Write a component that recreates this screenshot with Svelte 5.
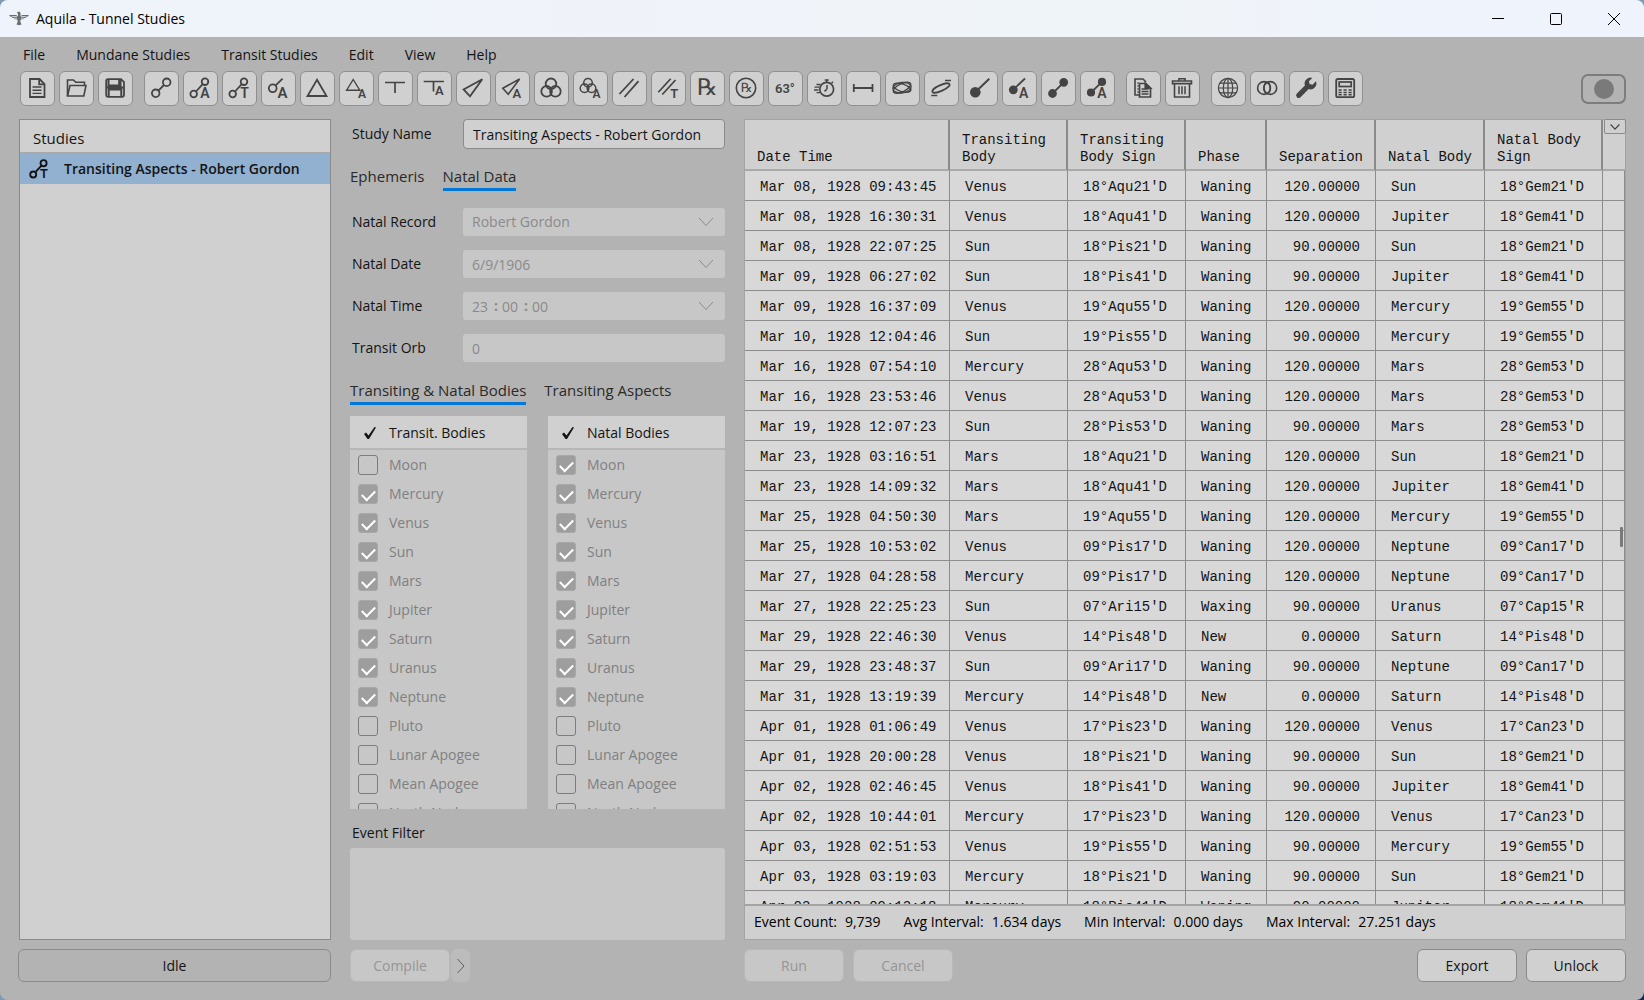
<script>
  const letter = (ch, x, y, size) =>
    `<text x="${x}" y="${y}" font-size="${size}" font-weight="600" fill="currentColor" stroke="none">${ch}</text>`;
  const rx = (x, y, size) =>
    `<text x="${x}" y="${y}" font-size="${size}" font-family="'DejaVu Serif', 'DejaVu Sans', serif" fill="currentColor" stroke="none">℞</text>`;
  const link = '<circle cx="9.7" cy="22" r="3.3"/><circle cx="21" cy="9.7" r="3.3"/><path d="M12 19.5 18.7 12.2"/>';

  const toolGroups = [
    [
      { name: 'New', art: '<path d="M9 7h9.5l5 5v13H9z"/><path d="M18.2 7v5.3h5.3"/><path d="M11.5 15h9M11.5 18.2h9M11.5 21.4h9" stroke-width="1.4"/>' },
      { name: 'Open', art: '<path d="M7.5 24V8h6l2.2 2.3h8.8v3.2" stroke-width="1.6"/><path d="M7.5 24 10 13.5h16L23.8 24z" stroke-width="1.6"/>' },
      { name: 'Save', art: '<path d="M9 7.2h13l3 3V23a1.8 1.8 0 0 1-1.8 1.8H9A1.8 1.8 0 0 1 7.2 23V9A1.8 1.8 0 0 1 9 7.2z"/><path d="M9.5 7v6.5h12V7M20.2 8v4.5M7.5 15.5h17M9.7 25v-7.5h12.6V25" stroke-width="2"/>' }
    ],
    [
      { name: 'Aspects', art: '<circle cx="10.7" cy="21.3" r="3.8"/><circle cx="21.7" cy="10.3" r="3.8"/><path d="M13.4 18.6 19 13"/>' },
      { name: 'Aspects, all', art: link + letter('A', 16.3, 25.7, 14) },
      { name: 'Transiting aspects', art: link + letter('T', 17.3, 25.7, 14) },
      { name: 'Applying aspects', art: '<circle cx="10.7" cy="16.3" r="3.9"/><path d="M13.4 13.6 20.6 6.6"/>' + letter('A', 15.5, 25.7, 15) },
      { name: 'Triangles', art: '<path d="M16 7.8 25.5 24H6.5z"/>' },
      { name: 'Triangles, all', art: '<path d="M13.2 7.5 19.8 18.2H6.6z" stroke-width="1.4"/>' + letter('A', 18, 25.7, 12) },
      { name: 'T-squares', art: '<path d="M6 10.500h20M16 10.500v10.500" stroke-width="1.7"/>' },
      { name: 'T-squares, all', art: '<path d="M5.700 9.500H26M15.500 9.500v10" stroke-width="1.7"/>' + letter('A', 17, 23, 13) },
      { name: 'Kites', art: '<path d="M25.3 7.3 6.6 17.4l6.4 7z" stroke-width="1.8"/>' },
      { name: 'Kites, all', art: '<path d="M23.6 7 6.8 16.2l5.4 6z" stroke-width="1.6"/>' + letter('A', 16.6, 25.9, 13) },
      { name: 'Midpoints', art: '<circle cx="16" cy="11.8" r="5.3"/><circle cx="11.6" cy="19.3" r="5.3"/><circle cx="20.4" cy="19.3" r="5.3"/>' },
      { name: 'Midpoints, all', art: '<g stroke-width="1.5"><circle cx="14" cy="10.8" r="4.3"/><circle cx="10.5" cy="16.2" r="4.3"/><circle cx="17.5" cy="16.2" r="4.3"/></g>' + letter('A', 18.4, 25.9, 12) },
      { name: 'Parallels', art: '<path d="M6.5 22 20.5 7M11.5 25 25.5 9.2"/>' },
      { name: 'Parallels, transits', art: '<path d="M6.3 20.3 18.7 6.7M10.3 22.5 23.5 8" stroke-width="1.7"/>' + letter('T', 18.2, 25.9, 13) },
      { name: 'Retrogrades', art: rx(6, 22.8, 23) },
      { name: 'Retrogrades, circled', art: '<circle cx="16" cy="16" r="9.7" stroke-width="1.6"/>' + rx(10.8, 20, 13) },
      { name: 'Degrees', art: letter('63°', 6, 20.7, 13) },
      { name: 'Speed', art: '<circle cx="18.7" cy="17.2" r="6.9" stroke-width="1.7"/><path d="M16.7 8h4M18.7 8v2.4M23.5 11.2l1.6-1.4M19 17.2v-4.3M18.7 17.4l-2.2 2" stroke-width="1.5"/><path d="M8.5 12.5h4M6.5 15.2h5M6 18h4.5M8.5 20.7h3.5" stroke-width="1.3"/>' },
      { name: 'Distance', art: '<path d="M6.8 12v8M25.5 12v8M7 16h18.5" stroke-width="1.8"/>' },
      { name: 'Orbits', art: '<g stroke-width="1.4"><ellipse cx="16" cy="15.7" rx="9.6" ry="4" transform="rotate(-26 16 15.7)"/><ellipse cx="16" cy="15.7" rx="9.2" ry="3.8" transform="rotate(18 16 15.7)"/><ellipse cx="16" cy="15.7" rx="9.2" ry="5.2" transform="rotate(-8 16 15.7)"/></g>' },
      { name: 'Orbit extremes', art: '<ellipse cx="16" cy="16" rx="9.4" ry="2.9" transform="rotate(-24 16 16)" stroke-width="1.7"/><path d="M20 8.500h6M6.300 23.500h6" stroke-width="1.6"/>' },
      { name: 'Point', art: '<circle cx="11.3" cy="20.3" r="5.3" fill="currentColor" stroke="none"/><path d="M12 19.5 25.3 6.7" stroke-width="2"/>' },
      { name: 'Point, all', art: '<circle cx="10.3" cy="17.8" r="4.4" fill="currentColor" stroke="none"/><path d="M11 17 22 6.5"/>' + letter('A', 16, 25.7, 14) },
      { name: 'Pairs', art: '<g fill="currentColor"><circle cx="10.5" cy="21.5" r="3.5"/><circle cx="21.7" cy="10.3" r="3.5"/></g><path d="M10.5 21.5 21.7 10.3"/>' },
      { name: 'Pairs, all', art: '<g fill="currentColor"><circle cx="10" cy="20.5" r="3.2"/><circle cx="21" cy="9.9" r="3.2"/></g><path d="M10 20.5 21 9.9"/>' + letter('A', 16.2, 25.7, 14) }
    ],
    [
      { name: 'Copy', art: '<path d="M12 23H8V7h8l3 3" stroke-width="1.6"/><path d="M10 11h2M10 14h2M10 17h2M10 20h2" stroke-width="1.2"/><path d="M12.5 11.5h6.3l4.7 4.5v9h-11z" stroke-width="1.7"/><path d="M18.3 11.5V16h5z" fill="currentColor"/><path d="M14.5 17h7M14.5 19.5h7M14.5 22h7" stroke-width="1.3"/>' },
      { name: 'Delete', art: '<path d="M6.5 9h19v2.6h-19zM13 9V6.8h6V9M8.5 11.8V25h15V11.8" stroke-width="1.6"/><path d="M13 14.3v8M16 14.3v8M19 14.3v8" stroke-width="1.5"/>' }
    ],
    [
      { name: 'Locations', art: '<g stroke-width="1.2"><circle cx="16" cy="16" r="9.6"/><ellipse cx="16" cy="16" rx="4.7" ry="9.6"/><path d="M16 6.4v19.2M6.4 16h19.2M8 11.2h16M8 20.8h16"/></g>' },
      { name: 'Charts', art: '<g stroke-width="1.6"><circle cx="13" cy="16" r="6.4"/><circle cx="19.3" cy="16" r="6.4"/><ellipse cx="16.1" cy="16" rx="3.2" ry="5.6"/></g>' },
      { name: 'Settings', art: '<path d="M26 9.2 22.5 12.7 19.6 12 18.9 9.2 22.3 5.9a6 6 0 0 0-7.4 7.6L6.9 21.6a2.5 2.5 0 0 0 3.6 3.6l8.2-8.1A6 6 0 0 0 26 9.2z" fill="currentColor" stroke="none"/>' },
      { name: 'Calculator', art: '<rect x="7.2" y="7" width="18" height="18.2" rx="1.8"/><rect x="10.2" y="10" width="12" height="4.5" stroke-width="1.7"/><path d="M9.5 18h3.2M14.5 18h3.2M19.5 18h3.2M9.5 20.4h3.2M14.5 20.4h3.2M19.5 20.4h3.2M9.5 22.8h3.2M14.5 22.8h3.2M19.5 22.8h3.2" stroke-width="1.5"/>' }
    ]
  ];
  const studyArt = link + letter('T', 17, 25.7, 14);

  const menus = ['File', 'Mundane Studies', 'Transit Studies', 'Edit', 'View', 'Help'];

  const bodies = ['Moon', 'Mercury', 'Venus', 'Sun', 'Mars', 'Jupiter', 'Saturn', 'Uranus', 'Neptune', 'Pluto', 'Lunar Apogee', 'Mean Apogee', 'North Node'];
  const unselected = ['Pluto', 'Lunar Apogee', 'Mean Apogee', 'North Node'];
  const bodyLists = [
    { id: 'transit', title: 'Transit. Bodies', off: ['Moon', ...unselected] },
    { id: 'natal', title: 'Natal Bodies', off: unselected }
  ];

  const columns = [
    ['Date Time', 205], ['Transiting Body', 118], ['Transiting Body Sign', 118], ['Phase', 81],
    ['Separation', 109], ['Natal Body', 109], ['Natal Body Sign', 118], ['', 22]
  ];

  const events = `Mar 08, 1928 09:43:45|Venus|18°Aqu21'D|Waning|120.00000|Sun|18°Gem21'D
Mar 08, 1928 16:30:31|Venus|18°Aqu41'D|Waning|120.00000|Jupiter|18°Gem41'D
Mar 08, 1928 22:07:25|Sun|18°Pis21'D|Waning|90.00000|Sun|18°Gem21'D
Mar 09, 1928 06:27:02|Sun|18°Pis41'D|Waning|90.00000|Jupiter|18°Gem41'D
Mar 09, 1928 16:37:09|Venus|19°Aqu55'D|Waning|120.00000|Mercury|19°Gem55'D
Mar 10, 1928 12:04:46|Sun|19°Pis55'D|Waning|90.00000|Mercury|19°Gem55'D
Mar 16, 1928 07:54:10|Mercury|28°Aqu53'D|Waning|120.00000|Mars|28°Gem53'D
Mar 16, 1928 23:53:46|Venus|28°Aqu53'D|Waning|120.00000|Mars|28°Gem53'D
Mar 19, 1928 12:07:23|Sun|28°Pis53'D|Waning|90.00000|Mars|28°Gem53'D
Mar 23, 1928 03:16:51|Mars|18°Aqu21'D|Waning|120.00000|Sun|18°Gem21'D
Mar 23, 1928 14:09:32|Mars|18°Aqu41'D|Waning|120.00000|Jupiter|18°Gem41'D
Mar 25, 1928 04:50:30|Mars|19°Aqu55'D|Waning|120.00000|Mercury|19°Gem55'D
Mar 25, 1928 10:53:02|Venus|09°Pis17'D|Waning|120.00000|Neptune|09°Can17'D
Mar 27, 1928 04:28:58|Mercury|09°Pis17'D|Waning|120.00000|Neptune|09°Can17'D
Mar 27, 1928 22:25:23|Sun|07°Ari15'D|Waxing|90.00000|Uranus|07°Cap15'R
Mar 29, 1928 22:46:30|Venus|14°Pis48'D|New|0.00000|Saturn|14°Pis48'D
Mar 29, 1928 23:48:37|Sun|09°Ari17'D|Waning|90.00000|Neptune|09°Can17'D
Mar 31, 1928 13:19:39|Mercury|14°Pis48'D|New|0.00000|Saturn|14°Pis48'D
Apr 01, 1928 01:06:49|Venus|17°Pis23'D|Waning|120.00000|Venus|17°Can23'D
Apr 01, 1928 20:00:28|Venus|18°Pis21'D|Waning|90.00000|Sun|18°Gem21'D
Apr 02, 1928 02:46:45|Venus|18°Pis41'D|Waning|90.00000|Jupiter|18°Gem41'D
Apr 02, 1928 10:44:01|Mercury|17°Pis23'D|Waning|120.00000|Venus|17°Can23'D
Apr 03, 1928 02:51:53|Venus|19°Pis55'D|Waning|90.00000|Mercury|19°Gem55'D
Apr 03, 1928 03:19:03|Mercury|18°Pis21'D|Waning|90.00000|Sun|18°Gem21'D
Apr 03, 1928 09:13:18|Mercury|18°Pis41'D|Waning|90.00000|Jupiter|18°Gem41'D`
    .split('\n').map((line) => line.split('|'));

  const stats = [
    ['Event Count:', '9,739'], ['Avg Interval:', '1.634 days'],
    ['Min Interval:', '0.000 days'], ['Max Interval:', '27.251 days']
  ];
</script>

{#snippet chevron()}
  <svg class="chevron" viewBox="0 0 16 16" aria-hidden="true"><path d="M1 4 8 11.5 15 4" /></svg>
{/snippet}

<div class="window">
  <header class="titlebar">
    <svg class="logo" viewBox="0 0 20 16" aria-hidden="true">
      <path d="M0 4h7l2 1.3V2.6L7.6 2 9 .8h1.8l.7 1.2v3.3L13.2 4H20l-1.5 1.7h-1.2l-.6 1.3h-1.5l-.8 1.3H12l-.8 2 1.3 3.2-2.5.8-2.5-.8 1.3-3.2-.8-2H5.700L4.900 7H3.400l-.6-1.300H1.400z" />
      <path class="feather" d="M3 5.500h5M12 5.500h5M5 7.200h3M12 7.200h3" />
    </svg>
    <h1>Aquila - Tunnel Studies</h1>
    <div class="winbtns">
      <button aria-label="Minimize"><svg viewBox="0 0 14 14"><path d="M1 6.5h12" /></svg></button>
      <button aria-label="Maximize"><svg viewBox="0 0 14 14"><rect x="1.5" y="1.5" width="11" height="11" rx="1" /></svg></button>
      <button aria-label="Close"><svg viewBox="0 0 14 14"><path d="M1 1 13 13M13 1 1 13" /></svg></button>
    </div>
  </header>

  <nav class="menubar">
    {#each menus as m}<button>{m}</button>{/each}
  </nav>

  <div class="toolbar">
    {#each toolGroups as group}
      <div class="tools">
        {#each group as tool}
          <button class="tool" aria-label={tool.name}><svg viewBox="0 0 33 33">{@html tool.art}</svg></button>
        {/each}
      </div>
    {/each}
    <button class="lamp" aria-label="Status light"><span></span></button>
  </div>

  <main>
    <section class="studies">
      <h2>Studies</h2>
      <button class="study">
        <svg viewBox="4 4 24 24" aria-hidden="true">{@html studyArt}</svg>
        Transiting Aspects - Robert Gordon
      </button>
    </section>

    <section class="editor">
      <div class="field name">
        <label for="study-name">Study Name</label>
        <input id="study-name" value="Transiting Aspects - Robert Gordon" />
      </div>

      <div class="tabs first" role="tablist">
        <button role="tab" aria-selected="false">Ephemeris</button>
        <button role="tab" aria-selected="true" class="on">Natal Data</button>
      </div>

      <div class="fields">
        <div class="field">
          <label for="record">Natal Record</label>
          <div class="box"><select id="record" disabled><option>Robert Gordon</option></select>{@render chevron()}</div>
        </div>
        <div class="field">
          <label for="date">Natal Date</label>
          <div class="box"><input id="date" value="6/9/1906" disabled />{@render chevron()}</div>
        </div>
        <div class="field">
          <label for="hour">Natal Time</label>
          <div class="box time">
            <input id="hour" value="23" disabled /><b>:</b>
            <input aria-label="Minutes" value="00" disabled /><b>:</b>
            <input aria-label="Seconds" value="00" disabled />
            {@render chevron()}
          </div>
        </div>
        <div class="field">
          <label for="orb">Transit Orb</label>
          <div class="box"><input id="orb" value="0" disabled /></div>
        </div>
      </div>

      <div class="tabs second" role="tablist">
        <button role="tab" aria-selected="true" class="on">Transiting &amp; Natal Bodies</button>
        <button role="tab" aria-selected="false">Transiting Aspects</button>
      </div>

      <div class="lists">
        {#each bodyLists as list}
          <div class="list">
            <div class="listhead">
              <svg viewBox="0 0 14 14" aria-hidden="true"><path d="M1 8 3 6.5 5.5 9.5 11.5 1 13 1.5 6 13 4.5 13z" /></svg>
              {list.title}
            </div>
            {#each bodies as b}
              <label><input type="checkbox" name={list.id} checked={!list.off.includes(b)} disabled />{b}</label>
            {/each}
          </div>
        {/each}
      </div>

      <label class="filterlabel" for="filter">Event Filter</label>
      <textarea id="filter" disabled></textarea>
    </section>

    <section class="results">
      <div class="scroller">
        <table>
          <colgroup>
            {#each columns as [, width]}<col style="width: {width}px" />{/each}
          </colgroup>
          <thead>
            <tr>{#each columns as [title]}<th scope="col">{title}</th>{/each}</tr>
          </thead>
          <tbody>
            {#each events as row}
              <tr>{#each row as cell, i}<td class:num={i === 4}>{cell}</td>{/each}<td></td></tr>
            {/each}
          </tbody>
        </table>
      </div>
      <button class="chooser" aria-label="Choose columns">{@render chevron()}</button>
      <span class="thumb"></span>
      <dl class="stats">
        {#each stats as [term, value]}<div><dt>{term}</dt><dd>{value}</dd></div>{/each}
      </dl>
    </section>

    <div class="idle" role="status">Idle</div>

    <div class="actions split">
      <button class="btn" disabled>Compile</button>
      <button class="more" aria-label="Compile options" disabled><svg viewBox="0 0 10 16"><path d="M1.5 1 8 8 1.5 15" /></svg></button>
    </div>

    <div class="actions">
      <button class="btn" disabled>Run</button>
      <button class="btn" disabled>Cancel</button>
      <span class="spacer"></span>
      <button class="btn">Export</button>
      <button class="btn">Unlock</button>
    </div>
  </main>
</div>

<style>
  :global(body) {
    margin: 0;
    background: radial-gradient(circle at 100% 100%, #10275a 0 40px, transparent 41px), #7f9ab5;
  }
  .window, .window * { box-sizing: border-box; }
  .window {
    height: 100vh;
    display: flex;
    flex-direction: column;
    overflow: hidden;
    border-radius: 8px;
    background: #b3b3b3;
    color: #141414;
    font: 14px/20px "Open Sans", "Noto Sans", sans-serif;
  }
  button { font: inherit; color: inherit; padding: 0; border: 0; background: none; }
  svg { display: block; fill: none; stroke: currentColor; }

  .titlebar {
    display: flex;
    align-items: center;
    height: 37px;
    padding: 0 1px 0 9px;
    background: linear-gradient(90deg, #eff3fb, #eff4f8 70%, #eff3fb 85%);
    flex: none;
  }
  .logo { width: 20px; height: 16px; margin-right: 7px; fill: #68706f; stroke: none; }
  .feather { stroke: #c9cfd2; stroke-width: 1; }
  h1 { margin: 0; font-size: 14px; font-weight: 400; color: #000; flex: 1; }
  .winbtns { display: flex; }
  .winbtns button { width: 58px; height: 37px; display: grid; place-items: center; color: #000; }
  .winbtns svg { width: 14px; height: 14px; }

  .menubar { display: flex; gap: 31px; padding: 8px 23px 0; flex: none; }

  .toolbar { display: flex; gap: 11px; padding: 6px 18px 0 20px; align-items: center; flex: none; }
  .tools { display: flex; gap: 4px; }
  .tool { width: 35px; height: 35px; border: 1px solid #909090; border-radius: 6px; background: #d0d0d0; color: #444; }
  .tool svg {
    width: 33px;
    height: 33px;
    stroke-width: 1.8;
    font-family: Roboto, sans-serif;
  }
  .lamp {
    margin-left: auto;
    width: 45px;
    height: 30px;
    border: 2px solid #7d7d7d;
    border-radius: 7px;
    display: grid;
    place-items: center;
  }
  .lamp span { width: 20px; height: 20px; border-radius: 50%; background: #7a7a7a; }

  main {
    flex: 1;
    min-height: 0;
    display: grid;
    grid-template-columns: minmax(0, 312fr) minmax(0, 375fr) minmax(0, 882fr);
    grid-template-rows: minmax(0, 1fr) 33px;
    gap: 9px 19px;
    padding: 13px 18px 18px 19px;
  }

  .studies { border: 1px solid #8b8b8b; background: #d0d0d0; }
  h2 { margin: 0; padding: 8px 13px 4px; font-size: 15px; line-height: 20px; font-weight: 400; border-bottom: 2px solid #a9a9a9; }
  .study {
    display: flex;
    align-items: center;
    gap: 14px;
    width: 100%;
    height: 30px;
    padding-left: 8px;
    background: #92b0cf;
    font-weight: 600;
    white-space: nowrap;
  }
  .study svg { width: 22px; height: 22px; stroke-width: 2; font-family: Roboto, sans-serif; }

  .editor { display: flex; flex-direction: column; min-width: 0; }
  .field { display: grid; grid-template-columns: 112px minmax(0, 1fr); align-items: center; }
  .field label { padding-left: 2px; }
  input, select, textarea { font: inherit; color: inherit; border: 0; margin: 0; background: none; border-radius: 0; }
  .name input {
    height: 30px;
    padding: 0 9px;
    border: 1px solid #8a8a8a;
    border-radius: 4px;
    background: #d0d0d0;
    min-width: 0;
    margin-left: 1px;
  }
  .tabs { display: flex; gap: 18px; font-size: 15px; }
  .tabs button { height: 27px; border-bottom: 3px solid transparent; white-space: nowrap; color: #2a2a2a; }
  .tabs .on { border-color: #0078d7; }
  .first { padding: 15px 0 17px; }
  .second { padding: 16px 0 11px; }
  .fields { display: grid; gap: 14px; }
  .box {
    display: flex;
    align-items: center;
    height: 28px;
    padding: 0 11px 0 9px;
    border-radius: 3px;
    background: #c7c7c7;
    color: #8a8a8a;
    margin-left: 1px;
  }
  .box input, .box select { flex: 1; min-width: 0; height: 28px; padding: 0; opacity: 1; appearance: none; }
  .chevron { width: 16px; height: 16px; flex: none; }
  .time b { margin: 0 4px; }
  .time input { flex: none; width: 18px; }
  .time .chevron { margin-left: auto; }

  .lists { display: grid; grid-template-columns: 1fr 1fr; gap: 21px; flex: 1 1 392px; min-height: 0; }
  .list { background: #c7c7c7; overflow: hidden; color: #808080; }
  .listhead {
    display: flex;
    align-items: center;
    gap: 12px;
    height: 34px;
    padding: 1px 0 0 13px;
    border-bottom: 2px solid #b6b6b6;
    background: #d0d0d0;
    color: #141414;
  }
  .listhead svg { width: 14px; height: 14px; fill: currentColor; stroke: none; }
  .list label { display: flex; align-items: center; gap: 11px; height: 29px; padding-left: 8px; white-space: nowrap; }
  .list input {
    appearance: none;
    flex: none;
    display: grid;
    justify-content: center;
    width: 20px;
    height: 20px;
    border: 1px solid #7c7c7c;
    border-radius: 3px;
  }
  .list input:checked { background: #9e9e9e; border-color: #a8a8a8; }
  .list input:checked::after {
    content: "";
    width: 11px;
    height: 6px;
    margin-top: 5px;
    border: solid #fff;
    border-width: 0 0 2px 2px;
    transform: rotate(-45deg);
  }
  .filterlabel { padding: 14px 0 5px 2px; }
  textarea { height: 92px; border-radius: 3px; background: #c7c7c7; resize: none; flex: none; }

  .results { position: relative; display: flex; flex-direction: column; min-width: 0; border: 1px solid #a3a3a3; background: #d0d0d0; }
  .scroller { flex: 1; min-height: 0; overflow: hidden; border-bottom: 2px solid #a3a3a3; }
  table {
    width: 100%;
    table-layout: fixed;
    border-collapse: separate;
    border-spacing: 0;
    font: 14px/17px "Liberation Mono", "DejaVu Sans Mono", monospace;
  }
  th {
    height: 51px;
    padding: 0 10px 3px 12px;
    vertical-align: bottom;
    text-align: left;
    font-weight: 400;
    background: #d0d0d0;
    border-right: 2px solid #8a8a8a;
    border-bottom: 2px solid #a9a9a9;
  }
  th:last-child { border-right: 0; }
  td {
    height: 30px;
    padding: 4px 4px 0 15px;
    white-space: nowrap;
    background: #d8d8d8;
    border-right: 1px solid #8c8c8c;
    border-bottom: 1px solid #8c8c8c;
  }
  .num { text-align: right; padding: 4px 15px 0 0; }
  .chooser {
    position: absolute;
    top: -1px;
    right: -1px;
    width: 22px;
    height: 15px;
    display: grid;
    place-items: center;
    border: 1px solid #8a8a8a;
    border-radius: 2px;
    background: #d0d0d0;
    color: #444;
  }
  .chooser .chevron { width: 10px; height: 10px; stroke-width: 2; }
  .thumb { position: absolute; right: 2px; top: 50%; margin-top: -3px; width: 3px; height: 20px; background: #7a7a7a; border-radius: 1px; }
  .stats { display: flex; gap: 23px; height: 33px; margin: 0; padding: 6px 9px 0; flex: none; color: #000; }
  .stats div { display: flex; gap: 8px; }
  dd { margin: 0; }

  .idle { display: grid; place-items: center; border: 1px solid #8a8a8a; border-radius: 6px; margin-left: -1px; }
  .actions { display: flex; gap: 9px; min-width: 0; }
  .spacer { flex: 1; }
  .btn { width: 100px; height: 33px; border: 1px solid #8a8a8a; border-radius: 6px; background: #d0d0d0; }
  .btn:disabled { background: #c7c7c7; border-color: #b8b8b8; color: #959595; }
  .split { gap: 1px; }
  .more { width: 19px; height: 33px; display: grid; place-items: center; border-radius: 6px; background: #bcbcbc; color: #606060; }
  .more svg { width: 10px; height: 16px; }
</style>
